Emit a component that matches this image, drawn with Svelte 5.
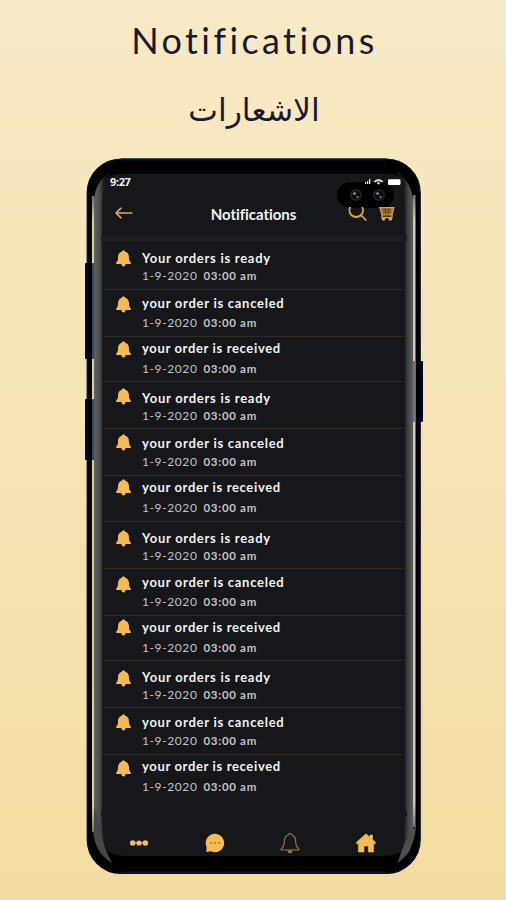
<script>
    const kinds = [
        { title: 'Your orders is ready', kind: 'ready' },
        { title: 'your order is canceled', kind: 'canceled' },
        { title: 'your order is received', kind: 'received' }
    ];

    // distance of each bell from the top of its row
    const bells = [8, 6, 4, 6, 5, 3, 8, 7, 3, 9, 6, 5];

    const items = bells.map((bell, i) => ({ ...kinds[i % 3], bell }));
</script>

<main>
    <h1>Notifications</h1>
    <h2 dir="rtl" lang="ar">الاشعارات</h2>

    <div class="phone">
        <svg class="frame" viewBox="0 0 340 720" width="340" height="720">
            <defs>
                <linearGradient id="left">
                    <stop offset="0" stop-color="#5d6364" />
                    <stop offset=".35" stop-color="#454847" />
                    <stop offset=".55" stop-color="#15171b" />
                </linearGradient>
                <linearGradient id="right">
                    <stop offset=".4" stop-color="#15171b" />
                    <stop offset=".65" stop-color="#3c3e3f" />
                    <stop offset="1" stop-color="#5d6062" />
                </linearGradient>
                <linearGradient id="edge" x1="0" y1="0" x2="0" y2="1">
                    <stop offset="0" stop-color="#777259" />
                    <stop offset=".04" stop-color="#d9cea5" />
                    <stop offset=".96" stop-color="#d9cea5" />
                    <stop offset="1" stop-color="#777259" />
                </linearGradient>
            </defs>
            <rect x="1" y="106" width="8" height="96" rx="1" fill="#04052f" />
            <rect x="1" y="242" width="8" height="61" rx="1" fill="#04052f" />
            <rect x="330" y="204" width="9" height="61" rx="1" fill="#04052f" />
            <rect x="3.200" y="2" width="333" height="714.500" rx="34" fill="#000" stroke="#05081c" stroke-width="1.200" />
            <path d="M37 2.500H302M37 715.500H302" stroke="#0a1438" stroke-width="2" />
            <path d="M34 17H306Q328 20 328 46V672Q326 699 300 699H42Q12 699 12 672V46Q12 20 34 17Z" fill="#15171b" />
            <path d="M10 42Q12 24 26 15Q18 27 18 54V660Q19 690 28 706Q13 699 10 675Z" fill="url(#left)" />
            <path d="M329 42Q327 25 313 14Q320 30 321 54V660Q321 688 313 706Q329 699 329 675Z" fill="url(#right)" />
            <path d="M10 650L15 662Q18 690 28 706Q11 696 9 674Z" fill="#454843" />
            <path d="M332 668Q331 692 314 706Q320 682 332 668Z" fill="#4c4f49" />
            <rect x="8" y="39" width="2" height="636" fill="url(#edge)" />
            <rect x="8" y="106" width="2" height="96" fill="#34466a" />
            <rect x="8" y="242" width="2" height="61" fill="#34466a" />
            <rect x="329" y="38" width="2.500" height="632" fill="url(#edge)" />
            <rect x="329" y="204" width="2.500" height="61" fill="#6d7285" />
        </svg>

        <svg class="camera" width="57" height="26" viewBox="0 0 57 26">
            <rect width="57" height="26" rx="13" fill="#000" />
            <circle cx="19" cy="13" r="6" fill="#202027" />
            <circle cx="19" cy="13" r="4" fill="#0b0b12" />
            <circle cx="17.500" cy="11.500" r="1.600" fill="#77779a" />
            <circle cx="20.500" cy="15" r="1.200" fill="#686788" />
            <circle cx="42" cy="13" r="6" fill="#202027" />
            <circle cx="42" cy="13" r="4" fill="#0b0b12" />
            <circle cx="40.500" cy="11.500" r="1.600" fill="#77779a" />
            <circle cx="43.500" cy="15" r="1.200" fill="#686788" />
        </svg>

        <div class="screen">
            <div class="status">
                <span>9:27</span>
                <svg width="36" height="8" viewBox="0 0 36 8">
                    <path d="M0 6V4H1.300V6ZM2 6V3H3.300V6ZM4 6V1H5.300V6Z" fill="#ddd" />
                    <path d="M8.500 3.500Q13.500 -1.500 18.500 3.500L16.800 4.500Q13.500 1.800 10.300 4.500ZM11.500 5Q13.500 3.500 15.500 5L13.500 6.500Z" fill="#ddd" />
                    <rect x="23" y="1.300" width="12.500" height="5.700" rx="1.200" fill="#fff" />
                </svg>
            </div>

            <header>
                <svg class="back" width="18" height="12" viewBox="0 0 18 12">
                    <path d="M17 6H1M6 1.200L1 6L6 10.800" fill="none" stroke="#e5a94b" stroke-width="1.600" stroke-linecap="round" stroke-linejoin="round" />
                </svg>
                <h3>Notifications</h3>
                <svg class="search" width="19" height="14" viewBox="0 0 19 14">
                    <path d="M2.200 0A6.800 6.800 0 1 0 14.200 0M13.500 8.500L17.800 13" fill="none" stroke="#d9a14b" stroke-width="1.800" stroke-linecap="round" />
                </svg>
                <svg class="cart" width="16" height="14" viewBox="0 0 16 14">
                    <path d="M.7 .5H15L13 8H3Z" fill="#a87834" stroke="#d9a14b" stroke-width="1.200" />
                    <path d="M3.500 2.700H12M4 5H12M6 1L7 8M10 1L9 8" stroke="#4a3318" stroke-width=".7" />
                    <path d="M3 8V10.500H13V8" fill="none" stroke="#d9a14b" stroke-width="1.300" />
                    <circle cx="4.500" cy="11.800" r="1.900" fill="#d9a14b" />
                    <circle cx="11.300" cy="11.800" r="1.900" fill="#d9a14b" />
                </svg>
            </header>

            <ul>
                {#each items as item}
                    <li class={item.kind}>
                        <div class="bell" style="padding-top: {item.bell}px">
                            <svg width="15" height="17" viewBox="0 0 15 17">
                                <path d="M7.500 .3Q8.900 .3 9.200 1.800C12 2.500 13 5 13 7.500C13 10.500 13.400 11.200 14.800 12.400V14H.2V12.400C1.600 11.200 2 10.500 2 7.500C2 5 3 2.500 5.800 1.800Q6.100 .3 7.500 .3ZM5.300 13.500H9.700Q9.400 16.500 7.500 16.500Q5.600 16.500 5.300 13.500Z" fill="#f5b956" />
                            </svg>
                        </div>
                        <div class="text">
                            <b>{item.title}</b>
                            <p><span>1-9-2020</span><em>03:00 am</em></p>
                        </div>
                    </li>
                {/each}
            </ul>

            <nav>
                <svg width="20" height="20" viewBox="0 0 20 20">
                    <path d="M4 10H16" stroke="#e9ad4e" stroke-width="1" />
                    <circle cx="3.700" cy="10" r="2.800" fill="#f5bd5e" />
                    <circle cx="10" cy="10" r="2.600" fill="#f5bd5e" />
                    <circle cx="16.300" cy="10" r="2.800" fill="#f5bd5e" />
                </svg>
                <svg width="20" height="20" viewBox="0 0 20 20">
                    <path d="M10 .8A9.200 9.200 0 1 1 6 18.300L1.300 19L1.600 14A9.200 9.200 0 0 1 10 .8Z" fill="#f5b956" />
                    <g fill="#a4742f">
                        <circle cx="6" cy="9.700" r="1" />
                        <circle cx="10" cy="9.700" r="1" />
                        <circle cx="14" cy="9.700" r="1" />
                    </g>
                </svg>
                <svg width="20" height="22" viewBox="0 0 20 22">
                    <path d="M10 1.200Q11.300 1.200 11.500 2.800C14.700 3.800 15.700 6.500 15.700 9.500C15.700 13.500 16.600 15 18.800 16.800V18H1.200V16.800C3.400 15 4.300 13.500 4.300 9.500C4.300 6.500 5.300 3.800 8.500 2.800Q8.700 1.200 10 1.200Z" fill="none" stroke="#a87a38" stroke-width="1.100" />
                    <path d="M7.300 18.500H12.700Q12 21.300 10 21.300Q8 21.300 7.300 18.500Z" fill="#a87a38" />
                </svg>
                <svg width="20" height="20" viewBox="0 0 20 20">
                    <path d="M10 .8L14 4.200V2H16.500V6.400L19.300 9V10.800H17.600V19H12.300V13H8V19H2.400V10.800H.7V9Z" fill="#f5b956" stroke="#f5b956" stroke-width=".6" stroke-linejoin="round" />
                </svg>
            </nav>
        </div>
    </div>
</main>

<style>
    :global(body) {
        margin: 0;
    }

    main {
        box-sizing: border-box;
        width: 506px;
        height: 900px;
        overflow: hidden;
        background: linear-gradient(#f8eac6, #f2dca0);
        color: #1b1930;
        font-family: Lato, "Open Sans", sans-serif;
    }

    h1, h2, h3, p, ul {
        margin: 0;
        padding: 0;
        font-weight: normal;
    }

    h1 {
        height: 82px;
        padding-left: 3px;
        line-height: 80px;
        font-size: 36px;
        letter-spacing: 3.4px;
        text-align: center;
        font-variant-ligatures: none;
    }

    h2 {
        height: 74px;
        padding-left: 2px;
        line-height: 56px;
        font-family: "DejaVu Sans", sans-serif;
        font-size: 31.5px;
        text-align: center;
    }

    .phone {
        position: relative;
        width: 340px;
        height: 720px;
        margin-left: 84px;
    }

    .frame {
        position: absolute;
        left: 0;
        top: 1px;
    }

    .screen {
        position: relative;
        display: flex;
        flex-direction: column;
        width: 306px;
        height: 720px;
        margin-left: 17px;
        color: #f1f1f1;
    }

    .status {
        display: flex;
        justify-content: space-between;
        height: 20px;
        padding: 17px 6px 0 9px;
    }

    .status span {
        font: bold 11px/18px "Open Sans", sans-serif;
        letter-spacing: -0.4px;
    }

    .status svg {
        margin-top: 5px;
    }

    header {
        display: flex;
        align-items: center;
        height: 38px;
        padding: 0 12px 4px 14px;
        border-bottom: 7px solid #1b1d21;
    }

    .back {
        margin-top: 1px;
    }

    h3 {
        flex: 1;
        padding: 4px 0 0 26px;
        text-align: center;
        font-size: 15px;
        font-weight: bold;
        letter-spacing: -0.05px;
        font-variant-ligatures: none;
    }

    .search {
        margin: 3px 12px 0 0;
    }

    .cart {
        margin-top: 3px;
    }

    ul {
        height: 569px;
        padding-top: 0.4px;
        list-style: none;
    }

    li {
        box-sizing: border-box;
        display: flex;
        height: 47px;
        padding-left: 15px;
        border-bottom: 1px solid #302c25;
    }

    li.ready {
        height: 47.3px;
    }

    li.received {
        height: 45.3px;
    }

    li:last-child {
        border: none;
    }

    .bell {
        width: 26px;
    }

    .bell svg {
        display: block;
    }

    .text {
        display: flex;
        flex-direction: column;
        padding-top: 8px;
    }

    b {
        height: 17px;
        line-height: 17px;
        font-size: 13px;
        letter-spacing: 0.73px;
        white-space: nowrap;
    }

    p {
        display: flex;
        gap: 6px;
        line-height: 17px;
        font-size: 12px;
        letter-spacing: 0.6px;
        color: #c2c3c5;
    }

    em {
        font-style: normal;
        font-weight: bold;
        font-size: 11.5px;
        letter-spacing: 0.7px;
    }

    .canceled .text {
        padding-top: 5.500px;
    }

    .canceled b {
        height: 18.500px;
    }

    .received .text {
        padding-top: 3px;
    }

    .received b {
        height: 20px;
        letter-spacing: 0.65px;
    }

    nav {
        display: flex;
        justify-content: space-between;
        align-items: center;
        height: 43px;
        padding: 4px 31px 0 28px;
        border-top: 6px solid #18191d;
    }

    .camera {
        position: absolute;
        left: 253px;
        top: 26px;
    }
</style>
